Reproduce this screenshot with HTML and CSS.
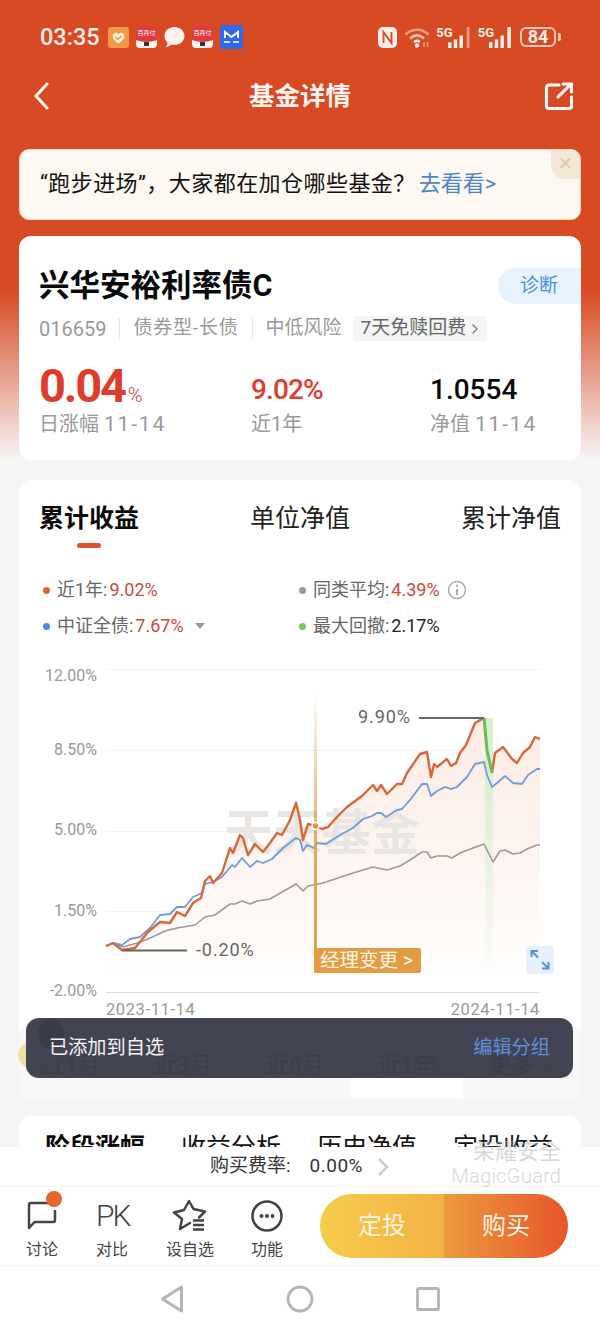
FILE: index.html
```html
<!DOCTYPE html>
<html lang="zh-CN">
<head>
    <meta charset="UTF-8"/>
    <title>基金详情</title>
    <link rel="stylesheet" href="styles.css">
</head>
<body>
<div class="page">
    <div class="status">
        <span class="clock">03:35</span>
        <svg class="app" width="21" height="21" viewBox="0 0 21 21"><rect width="21" height="21" rx="3" fill="#ef9a45"/><path d="M10.500 16.500C5 13 4 10 5 7.500C6.500 5 9.500 5.500 10.500 7.500C11.500 5.500 14.500 5 16 7.500C17 10 16 13 10.500 16.500Z" fill="#fdf0dc"/><path d="M7.500 10L10 12.500L13.500 9" fill="none" stroke="#ef9a45" stroke-width="1.500"/></svg>
        <svg class="app" width="21" height="22" viewBox="0 0 21 22"><path d="M0 4a4 4 0 0 1 4-4h13a4 4 0 0 1 4 4v11H0Z" fill="#e23a40"/><path d="M0 14q10.500 4 21 0v4a4 4 0 0 1-4 4H4a4 4 0 0 1-4-4Z" fill="#fdf3f0"/><text class="app-text" x="10.500" y="9">百丹付</text><rect x="8" y="16" width="5" height="4" fill="#333"/></svg>
        <svg class="app" width="21" height="22" viewBox="0 0 21 22"><path d="M10.500 1C16 1 20.500 4.800 20.500 10C20.500 15.200 16 19 10.500 19C9.500 19 8.500 18.900 7.600 18.600C6 20 4 20.800 1.800 21C3 19.600 3.500 18.200 3.500 16.800C1.800 15 .5 12.700 .5 10C.5 4.800 5 1 10.500 1Z" fill="#fdf1ec"/></svg>
        <svg class="app" width="21" height="22" viewBox="0 0 21 22"><path d="M0 4a4 4 0 0 1 4-4h13a4 4 0 0 1 4 4v11H0Z" fill="#e23a40"/><path d="M0 14q10.500 4 21 0v4a4 4 0 0 1-4 4H4a4 4 0 0 1-4-4Z" fill="#fdf3f0"/><text class="app-text" x="10.500" y="9">百丹付</text><rect x="8" y="16" width="5" height="4" fill="#333"/></svg>
        <svg class="app" width="23" height="24" viewBox="0 0 23 24"><rect width="23" height="24" rx="2" fill="#2f6be8"/><path d="M5 13V7L11.500 12L18 7V13" fill="none" stroke="#fff" stroke-width="2"/><path d="M4 17H10M13 17H19" stroke="#fff" stroke-width="1.500"/></svg>
        <span class="status-gap"></span>
        <svg width="19" height="21" viewBox="0 0 19 21"><rect width="19" height="21" rx="5" fill="#fbeee8"/><path d="M5.500 16V5L13.500 16V5" fill="none" stroke="#d84a23" stroke-width="1.800"/></svg>
        <svg class="wifi" width="27" height="22" viewBox="0 0 27 22"><path d="M1.500 8.500C8 2 18 2 24.500 8.500" fill="none" stroke="#eb9a80" stroke-width="2.500"/><path d="M6 12.500C10.500 8.500 15.500 8.500 20 12.500" fill="none" stroke="#f4c2b0" stroke-width="2.500"/><path d="M10 16C12 14.500 14 14.500 16 16" fill="none" stroke="#fbeee8" stroke-width="2.500"/><circle cx="13" cy="19.500" r="2.200" fill="#fbeee8"/><path d="M20 16V21M23.500 16V21" stroke="#eb9a80" stroke-width="1.500"/></svg>
        <span class="signal"><b class="five">5G</b><svg width="23" height="22" viewBox="0 0 20 23" preserveAspectRatio="none"><path d="M1.500 23V17M6.500 23V14M11.500 23V10" stroke="#fbeee8" stroke-width="3"/><path d="M17.500 23V1" stroke="#ec9a80" stroke-width="2.500"/></svg></span>
        <span class="signal"><b class="five">5G</b><svg width="23" height="22" viewBox="0 0 20 23" preserveAspectRatio="none"><path d="M1.500 23V17M6.500 23V14M11.500 23V10M17.500 23V1" stroke="#fbeee8" stroke-width="3"/></svg></span>
        <span class="battery"><b>84</b></span>
    </div>

    <div class="nav">
        <svg class="nav-back" width="16" height="28" viewBox="0 0 16 28"><path d="M14 2L3 14L14 26" fill="none" stroke="#fff" stroke-width="3" stroke-linecap="round" stroke-linejoin="round"/></svg>
        <h1 class="nav-title">基金详情</h1>
        <svg class="nav-share" width="28" height="28" viewBox="0 0 28 28"><path d="M14 3H4a2.500 2.500 0 0 0-2.500 2.500v18.500a2.500 2.500 0 0 0 2.500 2.500h20a2.500 2.500 0 0 0 2.500-2.500v-9M13 15L26 2M18 2H26.500V10" fill="none" stroke="#fff" stroke-width="3" stroke-linecap="round" stroke-linejoin="round"/></svg>
    </div>

    <div class="banner">
        <span class="banner-text">“跑步进场”，大家都在加仓哪些基金？</span><a class="banner-link">去看看&gt;</a>
        <span class="banner-close">×</span>
    </div>

    <section class="card fund">
        <div class="fund-title">
            <h2>兴华安裕利率债C</h2>
            <span class="diagnose">诊断</span>
        </div>
        <div class="fund-meta">
            <span class="fund-code">016659</span><i></i><span class="fund-type">债券型-长债</span><i></i><span>中低风险</span>
            <span class="fee-tag">7天免赎回费<svg width="8" height="12" viewBox="0 0 8 12"><path d="M1.500 1.500L6 6L1.500 10.500" fill="none" stroke="#888" stroke-width="1.500"/></svg></span>
        </div>
        <div class="stats">
            <div>
                <div class="stat-main red big">0.04<small>%</small></div>
                <div class="stat-label">日涨幅 <span>11-14</span></div>
            </div>
            <div>
                <div class="stat-main red narrow">9.02%</div>
                <div class="stat-label">近1年</div>
            </div>
            <div>
                <div class="stat-main">1.0554</div>
                <div class="stat-label">净值 <span>11-14</span></div>
            </div>
        </div>
    </section>

    <section class="card returns">
        <div class="tabs">
            <span class="tab active">累计收益</span>
            <span class="tab">单位净值</span>
            <span class="tab">累计净值</span>
        </div>
        <div class="legend">
            <div class="legend-item"><i class="dot orange"></i>近1年:<em>9.02%</em></div>
            <div class="legend-item"><i class="dot gray"></i>同类平均:<em>4.39%</em>
                <svg class="info" width="20" height="20" viewBox="0 0 20 20"><circle cx="10" cy="10" r="8.500" fill="none" stroke="#aaa" stroke-width="1.500"/><path d="M10 9V15" stroke="#aaa" stroke-width="2"/><circle cx="10" cy="5.800" r="1.200" fill="#aaa"/></svg>
            </div>
            <div class="legend-item"><i class="dot blue"></i>中证全债:<em>7.67%</em><i class="caret"></i></div>
            <div class="legend-item"><i class="dot green"></i>最大回撤:<span class="plain">2.17%</span></div>
        </div>

        <svg class="chart" width="562" height="360" viewBox="19 660 562 360">
            <defs>
                <linearGradient id="area" x1="0" y1="718" x2="0" y2="975" gradientUnits="userSpaceOnUse">
                    <stop offset="0" stop-color="#fbebe3"/>
                    <stop offset="1" stop-color="#fffdfc"/>
                </linearGradient>
                <linearGradient id="manager" x1="0" y1="690" x2="0" y2="950" gradientUnits="userSpaceOnUse">
                    <stop offset="0" stop-color="#e0a04c" stop-opacity="0"/>
                    <stop offset=".6" stop-color="#e0a04c" stop-opacity=".9"/>
                    <stop offset="1" stop-color="#e0a04c"/>
                </linearGradient>
                <linearGradient id="drawdown" x1="0" y1="718" x2="0" y2="975" gradientUnits="userSpaceOnUse">
                    <stop offset="0" stop-color="#cdeec8" stop-opacity=".9"/>
                    <stop offset="1" stop-color="#cdeec8" stop-opacity="0"/>
                </linearGradient>
            </defs>

            <path class="grid" d="M106 669.500H540M106 750.500H540M106 831.500H540M106 911.500H540"/>
            <path class="axis" d="M106 992.500H540"/>
            <text class="tick" x="97" y="681">12.00%</text>
            <text class="tick" x="97" y="755">8.50%</text>
            <text class="tick" x="97" y="835">5.00%</text>
            <text class="tick" x="97" y="916">1.50%</text>
            <text class="tick" x="97" y="996">-2.00%</text>

            <path fill="url(#area)" d="M106 975V946L113 943L122 950L135 948L148 932L160 922L170 923L177 912L185 916L193 903L201 898L205 881L210 876L213 883L222 873L230 848L233 853L240 835L243 838L248 855L255 844L263 852L270 843L277 833L282 835L290 820L296 803L300 820L303 840L308 824L315 826L322 829L328 827L337 817L347 807L362 796L373 785L377 791L381 785L387 794L397 784L402 784L407 773L420 754L427 752L431 777L434 764L437 767L447 759L451 766L456 763L460 753L466 745L475 723L482 719L484 718L487 750L492 773L495 753L503 747L512 759L517 763L523 753L530 747L535 737L540 739V975Z"/>
            <text class="mark" x="224" y="850">天天基金</text>
            <rect x="485" y="718" width="8" height="258" fill="url(#drawdown)"/>

            <polyline class="line line-gray" points="106,946 113,943 123,947 137,943 148,939 165,931 177,928 195,925 205,917 215,915 230,904 235,904 242,901 250,904 257,901 270,899 296,884 303,891 308,886 323,883 350,874 373,867 387,870 400,866 410,860 422,852 427,852 431,858 437,856 447,856 452,858 460,853 473,848 484,844 493,862 500,851 505,850 513,854 520,853 527,849 537,845 540,845"/>
            <polyline class="line line-blue" points="106,946 113,943 122,945 130,939 140,937 150,928 160,915 170,914 177,907 185,907 193,897 202,893 205,884 213,882 222,877 232,865 235,867 242,858 250,867 257,861 263,863 272,859 283,848 296,838 300,840 303,851 307,845 314,848 317,843 326,844 340,835 353,828 363,819 372,816 377,813 381,813 386,817 397,810 402,809 410,800 422,784 427,784 431,796 437,791 445,787 451,789 457,787 467,777 475,764 484,762 487,775 492,787 497,783 505,776 513,783 522,784 528,775 537,769 540,769"/>
            <polyline class="line line-orange" points="106,946 113,943 122,950 135,948 148,932 160,922 170,923 177,912 185,916 193,903 201,898 205,881 210,876 213,883 222,873 230,848 233,853 240,835 243,838 248,855 255,844 263,852 270,843 277,833 282,835 290,820 296,803 300,820 303,840 308,824 315,826 322,829 328,827 337,817 347,807 362,796 373,785 377,791 381,785 387,794 397,784 402,784 407,773 420,754 427,752 431,777 434,764 437,767 447,759 451,766 456,763 460,753 466,745 475,723 482,719 484,718"/>
            <polyline class="line line-orange" points="492,773 495,753 503,747 512,759 517,763 523,753 530,747 535,737 540,739"/>
            <polyline class="line line-green" points="484,718 487,750 492,773"/>

            <path class="callout" d="M419 718H484M122 950.500H187"/>
            <text class="callout-text" x="358" y="723">9.90%</text>
            <text class="callout-text" x="196" y="956">-0.20%</text>

            <rect x="314" y="690" width="3" height="260" fill="url(#manager)"/>
            <circle cx="315.500" cy="826" r="3.500" fill="#dd9a48" stroke="#fff" stroke-width="1.500"/>
            <rect x="314" y="948" width="107" height="25" rx="2" fill="#e39c42"/>
            <text class="manager-text" x="320" y="967">经理变更 &gt;</text>

            <rect x="526" y="946" width="28" height="28" rx="3" fill="#e8f0fb"/>
            <path d="M531.500 951L538 957.500M531.500 957V951H538M548.500 968.500L542 962M548.500 962V968.500H542" fill="none" stroke="#5b8fe0" stroke-width="2"/>
            <text class="date" x="106" y="1015">2023-11-14</text>
            <text class="date date-end" x="540" y="1015">2024-11-14</text>
        </svg>

        <div class="ranges">
            <span>近1月</span>
            <span>近3月</span>
            <span>近6月</span>
            <span class="on">近1年</span>
            <span>更多<i class="caret"></i></span>
        </div>
    </section>

    <section class="card more">
        <div class="more-tabs">
            <b>阶段涨幅</b><span>收益分析</span><span>历史净值</span><span>定投收益</span>
        </div>
    </section>

    <div class="mascot"><i></i></div>

    <div class="toast">
        <span>已添加到自选</span>
        <a>编辑分组</a>
    </div>

    <div class="bottom">
        <div class="fee">
            <span>购买费率:</span><span class="fee-value">0.00%</span>
            <svg width="12" height="20" viewBox="0 0 12 20"><path d="M2 2L10 10L2 18" fill="none" stroke="#ccc" stroke-width="2.500"/></svg>
        </div>
        <div class="toolbar">
            <div class="tool tool-talk">
                <svg width="44" height="44" viewBox="0 0 44 44"><path d="M27 13H10a2 2 0 0 0-2 2V38L13.500 32H32a2 2 0 0 0 2-2V20" fill="none" stroke="#444" stroke-width="2.500" stroke-linejoin="round"/><circle cx="33" cy="9" r="8" fill="#e8652e"/></svg>
                <span>讨论</span>
            </div>
            <div class="tool tool-pk">
                <b>PK</b>
                <span>对比</span>
            </div>
            <div class="tool tool-pick">
                <svg width="36" height="36" viewBox="0 0 36 36"><path d="M27 21.500L33 15.500L21.500 13L17 5L12 14L2 16.500L10 23L8 33L18 27" fill="none" stroke="#444" stroke-width="2.500" stroke-linejoin="round" stroke-linecap="round"/><path d="M21 24.500H32M21 29H32M21 33.500H32" stroke="#444" stroke-width="2.500"/></svg>
                <span>设自选</span>
            </div>
            <div class="tool tool-func">
                <svg width="36" height="36" viewBox="0 0 36 36"><circle cx="18" cy="18" r="14.500" fill="none" stroke="#444" stroke-width="2.500"/><circle cx="12.500" cy="18" r="2" fill="#444"/><circle cx="18" cy="18" r="2" fill="#444"/><circle cx="23.500" cy="18" r="2" fill="#444"/></svg>
                <span>功能</span>
            </div>
            <div class="actions">
                <span class="action action-plan">定投</span>
                <span class="action action-buy">购买</span>
            </div>
        </div>
        <div class="sysnav">
            <svg width="24" height="28" viewBox="0 0 24 28"><path d="M21.500 2V26L2.500 14Z" fill="none" stroke="#b5b5b5" stroke-width="3" stroke-linejoin="round"/></svg>
            <svg width="28" height="28" viewBox="0 0 28 28"><circle cx="14" cy="14" r="12" fill="none" stroke="#b5b5b5" stroke-width="2.800"/></svg>
            <svg width="24" height="24" viewBox="0 0 24 24"><rect x="1.500" y="1.500" width="21" height="21" rx="1.500" fill="none" stroke="#b5b5b5" stroke-width="2.800"/></svg>
        </div>
    </div>

    <div class="guard">荣耀安全<br/><span>MagicGuard</span></div>
</div>
</body>
</html>
```

FILE: styles.css
```css
* {box-sizing:border-box;}
html, body {margin:0;padding:0;}
body {color:#111;font:20px/1.2 Roboto, "Noto Sans CJK SC", sans-serif;}
h1, h2 {margin:0;}
em, i {font-style:normal;}

.page {background:linear-gradient(#d84a23 0, #d84a23 290px, #f5f5f5 460px);height:1332px;overflow:hidden;position:relative;width:600px;}

/* status bar */
.status {align-items:center;color:#fbeee8;display:flex;gap:7px;height:74px;padding:0 44px 0 40px;}
.clock {font-size:23.5px;font-weight:500;margin-right:1px;}
.app-text {fill:#fff;font-size:6px;text-anchor:middle;}
.status-gap {flex:1;}
.wifi {margin-right:-2px;}
.signal {align-items:flex-start;display:flex;}
.five {font-size:13px;font-weight:700;line-height:1;margin-right:-5px;}
.battery {border:2px solid #f4c9b8;border-radius:6px;color:#fbeee8;display:block;height:20px;margin-left:1px;position:relative;text-align:center;width:36px;}
.battery b {display:block;font-size:18px;line-height:16px;}
.battery:after {background:#f4c9b8;border-radius:0 2px 2px 0;content:"";height:8px;position:absolute;right:-7px;top:4px;width:3px;}

/* nav */
.nav {align-items:center;display:grid;grid-template-columns:1fr auto 1fr;height:44px;padding:0 27px;}
.nav-back {margin-left:6px;}
.nav-title {color:#fbf3ee;font-size:25.5px;font-weight:700;}
.nav-share {justify-self:end;}

/* banner */
.banner {align-items:center;background:#fdf8f2;border:1px solid #f7d9b0;border-radius:10px;display:flex;font-size:22px;height:71px;margin:31px 19px 0;overflow:hidden;padding:0 0 0 20px;position:relative;}
.banner-text {letter-spacing:.45px;}
.banner-link {color:#4a86c8;margin-left:3px;}
.banner-close {background:#f3e8d8;border-radius:0 0 0 14px;color:#d8c9b0;font-size:24px;height:29px;line-height:27px;position:absolute;right:0;text-align:center;top:0;width:29px;}

/* cards */
.card {background:#fff;border-radius:12px;margin:0 19px;overflow:hidden;}

.fund {height:224px;margin-top:16px;padding:32px 0 0 20px;}
.fund-title {align-items:center;display:flex;height:36px;justify-content:space-between;}
.fund-title h2 {color:#0a0a0a;font-size:30.5px;font-weight:700;}
.diagnose {background:#e8f2fc;border-radius:18px 0 0 18px;color:#4a8fdc;font-size:19px;height:36px;line-height:36px;padding:0 23px 0 22px;}
.fund-meta {align-items:center;color:#999;display:flex;font-size:19px;height:25px;margin-top:12px;}
.fund-meta i {background:#e8e8e8;height:22px;margin:0 13px;width:1px;}
.fund-code {font-size:20px;}
.fund-type {letter-spacing:.8px;}
.fee-tag {align-items:center;background:#f5f5f5;color:#666;display:flex;gap:5px;height:25px;margin-left:11px;padding:0 8px;}
.stats {display:grid;grid-template-columns:212px 179px 1fr;margin-top:23px;}
.stat-main {align-items:flex-end;color:#0a0a0a;display:flex;font-size:28px;font-weight:500;height:44px;line-height:36px;}
.stat-main.red {color:#e03c2c;}
.stat-main.narrow {letter-spacing:-.9px;}
.stat-main.big {font-size:47px;font-weight:700;letter-spacing:-2.2px;line-height:44px;}
.stat-main small {font-size:20px;font-weight:300;letter-spacing:0;line-height:26px;margin-left:3px;}
.stat-label {color:#999;font-size:20px;line-height:26px;margin-top:3px;}
.stat-label span {font-size:21px;letter-spacing:1.8px;}

.returns {margin-top:20px;}
.tabs {display:flex;height:92px;justify-content:space-between;padding:24px 20px 0;}
.tab {color:#222;font-size:25px;height:36px;position:relative;}
.tab.active {color:#0a0a0a;font-weight:700;}
.tab.active:after {background:#e0522d;border-radius:3px;bottom:-8px;content:"";height:5px;left:38px;position:absolute;width:24px;}
.legend {display:grid;grid-template-columns:256px 1fr;grid-auto-rows:36px;height:88px;padding-left:24px;}
.legend-item {align-items:center;color:#666;display:flex;font-size:18px;height:36px;}
.legend-item em {color:#c94a3e;margin-left:2px;}
.plain {color:#222;margin-left:2px;}
.dot {border-radius:50%;height:7px;margin-right:7px;width:7px;}
.dot.orange {background:#e0603a;}
.dot.gray {background:#999;}
.dot.blue {background:#4a8ae0;}
.dot.green {background:#78c466;}
.info {margin-left:7px;}
.caret {border-left:5px solid transparent;border-right:5px solid transparent;border-top:6px solid #999;display:inline-block;height:0;margin-left:11px;width:0;}

.chart {display:block;}
.grid {fill:none;stroke:#f3f3f3;stroke-width:1;}
.axis {fill:none;stroke:#ddd;stroke-width:1;}
.tick {fill:#999;font-size:16px;text-anchor:end;}
.mark {fill:#e9e5e2;font-size:49px;font-weight:700;}
.line {fill:none;stroke-linejoin:round;}
.line-gray {stroke:#a09a96;stroke-width:1.6;}
.line-blue {stroke:#6f9bdc;stroke-width:1.8;}
.line-orange {stroke:#d9673a;stroke-width:2.4;}
.line-green {stroke:#6fb95a;stroke-width:3;}
.callout {fill:none;stroke:#666;stroke-width:2;}
.callout-text {fill:#666;font-size:18px;letter-spacing:.9px;}
.manager-text {fill:#fdf4e6;font-size:19.5px;}
.date {fill:#999;font-size:16.5px;letter-spacing:.6px;}
.date-end {text-anchor:end;}

.ranges {background:#f8f8f8;color:#333;display:grid;font-size:23px;grid-template-columns:repeat(5, 112px);height:72px;margin-top:8px;}
.ranges span {align-items:center;display:flex;height:71px;justify-content:center;margin-left:-4px;padding-top:4px;width:112px;}
.ranges .on {background:#fff;}
.ranges .caret {margin-left:5px;}

.more {height:200px;margin-top:16px;}
.more-tabs {display:flex;font-size:25px;justify-content:space-between;padding:17px 28px 0 26px;}
.more-tabs b {color:#0a0a0a;font-weight:700;}

/* overlays */
.mascot {background:radial-gradient(circle at 70% 50%, #bfe3d6 0, #d8e8c0 55%, #f5dc8a 90%);border-radius:50%;height:32px;left:18px;position:absolute;top:1039px;width:44px;}
.mascot i {background:#1c1c1c;border-radius:50%;display:block;height:30px;left:20px;position:absolute;top:-20px;width:26px;}
.toast {align-items:center;background:rgba(61,62,77,.97);border-radius:13px;color:#f3f3f3;display:flex;font-size:19.2px;height:60px;justify-content:space-between;left:26px;padding:0 23px;position:absolute;top:1018px;width:547px;}
.toast a {color:#5f8fdc;}

.bottom {background:#fff;bottom:0;left:0;position:absolute;right:0;}
.fee {align-items:center;color:#333;display:flex;font-size:19px;height:39px;justify-content:center;padding-right:1px;}
.fee-value {letter-spacing:.5px;margin:0 14px 0 19px;}
.toolbar {align-items:center;border-bottom:1px solid #f3f3f3;border-top:1px solid #f2f2f2;display:flex;height:80px;padding:0 32px 0 26px;position:relative;}
.tool {align-items:center;color:#444;display:flex;flex-direction:column;font-size:16px;height:78px;justify-content:flex-end;left:0;padding-bottom:6px;position:absolute;top:0;width:60px;}
.tool svg {position:absolute;top:9px;}
.tool-talk {left:12px;}
.tool-talk svg {left:9px;top:3px;}
.tool-pk {left:82px;}
.tool-pk b {color:#444;font-size:30px;font-weight:300;left:14px;letter-spacing:-2px;line-height:36px;position:absolute;top:11px;}
.tool-pick {left:160px;}
.tool-func {left:237px;}
.tool-func svg {top:11px;}
.actions {border-radius:32px;color:#fdf3e0;display:flex;font-size:24px;height:64px;margin-left:auto;overflow:hidden;width:248px;}
.action {align-items:center;display:flex;flex:1;justify-content:center;}
.action-plan {background:linear-gradient(90deg, #f6cd4c, #f3b144);}
.action-buy {background:linear-gradient(90deg, #ec9a3f, #e8552a);}
.sysnav {align-items:center;display:flex;height:66px;padding:0 160px 0 160px;justify-content:space-between;}

.guard {color:rgba(190,190,190,.6);font-size:22px;line-height:24px;position:absolute;right:39px;text-align:right;top:1140px;}
.guard span {font-size:20.5px;font-weight:300;}
```
